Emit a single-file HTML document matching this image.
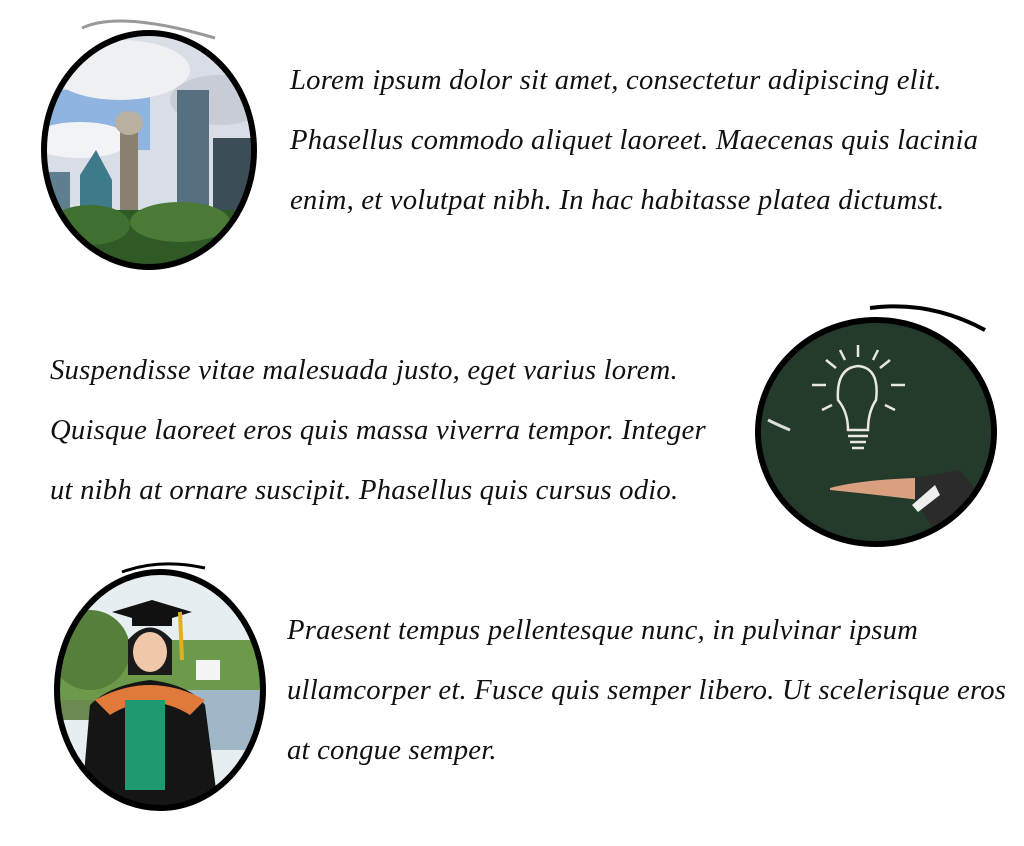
<!DOCTYPE html>
<html><head><meta charset="utf-8">
<style>
html,body{margin:0;padding:0;background:#fff;width:1024px;height:846px;overflow:hidden;position:relative}
.t{position:absolute;font-family:"Liberation Serif",serif;font-style:italic;font-size:28.7px;line-height:60px;color:#111;white-space:nowrap;letter-spacing:0.2px}
svg{position:absolute;left:0;top:0}
</style></head><body>
<svg width="1024" height="846">
<defs>
<clipPath id="c1"><ellipse cx="149" cy="150" rx="105" ry="117"/></clipPath>
<clipPath id="c2"><ellipse cx="876" cy="432" rx="118" ry="112"/></clipPath>
<clipPath id="c3"><ellipse cx="160" cy="690" rx="103" ry="118"/></clipPath>
</defs>
<g clip-path="url(#c1)">
<rect x="30" y="20" width="240" height="260" fill="#d9dde6"/>
<rect x="30" y="90" width="120" height="60" fill="#8fb4e0"/>
<ellipse cx="120" cy="70" rx="70" ry="30" fill="#eef0f4"/>
<ellipse cx="220" cy="100" rx="50" ry="25" fill="#c8ccd6"/>
<ellipse cx="80" cy="140" rx="50" ry="18" fill="#f2f3f6"/>
<rect x="48" y="172" width="22" height="45" fill="#5f7f90"/>
<polygon points="80,215 80,175 96,150 112,180 112,215" fill="#3f7a8a"/>
<rect x="120" y="130" width="18" height="90" fill="#8a8070"/>
<ellipse cx="129" cy="123" rx="14" ry="12" fill="#b8b0a0"/>
<rect x="177" y="90" width="32" height="120" fill="#56707f"/>
<rect x="213" y="138" width="38" height="80" fill="#3c4d58"/>
<rect x="30" y="210" width="240" height="70" fill="#2f5a25"/>
<ellipse cx="90" cy="225" rx="40" ry="20" fill="#3f7030"/>
<ellipse cx="180" cy="222" rx="50" ry="20" fill="#4a7a35"/>
</g>
<ellipse cx="149" cy="150" rx="105" ry="117" fill="none" stroke="#000" stroke-width="6"/>
<path d="M82 28 Q120 10 215 38" fill="none" stroke="#999" stroke-width="3"/>
<g clip-path="url(#c2)">
<rect x="750" y="310" width="250" height="240" fill="#243a2b"/>
<g stroke="#e8e8e0" stroke-width="2.5" fill="none">
<path d="M838 400 Q836 368 858 366 Q880 368 876 400 Q868 412 868 430 L848 430 Q848 412 838 400Z"/>
<path d="M848 436 H868 M850 442 H866 M852 448 H864"/>
<path d="M826 360 l10 8 M812 385 h14 M822 410 l10 -5 M858 345 v12 M890 360 l-10 8 M905 385 h-14 M895 410 l-10 -5 M840 350 l5 10 M878 350 l-5 10"/>
</g>
<path d="M830 488 Q860 480 915 478 L930 490 L920 500 Q870 494 830 490Z" fill="#d9a080"/>
<polygon points="915,478 960,470 1000,520 940,540 915,500" fill="#2b2b2b"/>
<polygon points="912,505 935,485 940,495 918,512" fill="#eee"/>
</g>
<ellipse cx="876" cy="432" rx="118" ry="112" fill="none" stroke="#000" stroke-width="6"/>
<path d="M870 308 Q930 300 985 330" fill="none" stroke="#000" stroke-width="4"/>
<path d="M768 420 q10 5 22 10" stroke="#ddd" stroke-width="3" fill="none"/>
<g clip-path="url(#c3)">
<rect x="50" y="570" width="230" height="250" fill="#e6eef2"/>
<rect x="50" y="640" width="230" height="60" fill="#6c9a4a"/>
<ellipse cx="90" cy="650" rx="40" ry="40" fill="#557f3a"/>
<rect x="180" y="690" width="100" height="60" fill="#9fb7c6"/>
<rect x="50" y="700" width="130" height="20" fill="#6a8a50"/>
<rect x="196" y="660" width="24" height="20" fill="#f4f4f4"/>
<path d="M80 820 L90 705 Q110 685 150 680 Q190 685 205 705 L220 820Z" fill="#151515"/>
<path d="M95 700 Q150 670 205 700 L190 715 Q150 690 110 715Z" fill="#e07a3a"/>
<rect x="125" y="700" width="40" height="90" fill="#1f9a70"/>
<path d="M128 640 Q150 615 172 640 L172 675 L128 675Z" fill="#1a1a1a"/>
<ellipse cx="150" cy="652" rx="17" ry="20" fill="#f0c7a8"/>
<polygon points="112,612 152,600 192,612 152,624" fill="#111"/>
<rect x="132" y="614" width="40" height="12" fill="#111"/>
<path d="M180 612 L182 660" stroke="#e0b020" stroke-width="4"/>
</g>
<ellipse cx="160" cy="690" rx="103" ry="118" fill="none" stroke="#000" stroke-width="6"/>
<path d="M122 572 Q160 558 205 568" fill="none" stroke="#000" stroke-width="3"/>
</svg>
<div class="t" style="left:290px;top:50px">Lorem ipsum dolor sit amet, consectetur adipiscing elit.<br>Phasellus commodo aliquet laoreet. Maecenas quis lacinia<br>enim, et volutpat nibh. In hac habitasse platea dictumst.</div>
<div class="t" style="left:50px;top:340px">Suspendisse vitae malesuada justo, eget varius lorem.<br>Quisque laoreet eros quis massa viverra tempor. Integer<br>ut nibh at ornare suscipit. Phasellus quis cursus odio.</div>
<div class="t" style="left:287px;top:600px">Praesent tempus pellentesque nunc, in pulvinar ipsum<br>ullamcorper et. Fusce quis semper libero. Ut scelerisque eros<br>at congue semper.</div>
</body></html>
